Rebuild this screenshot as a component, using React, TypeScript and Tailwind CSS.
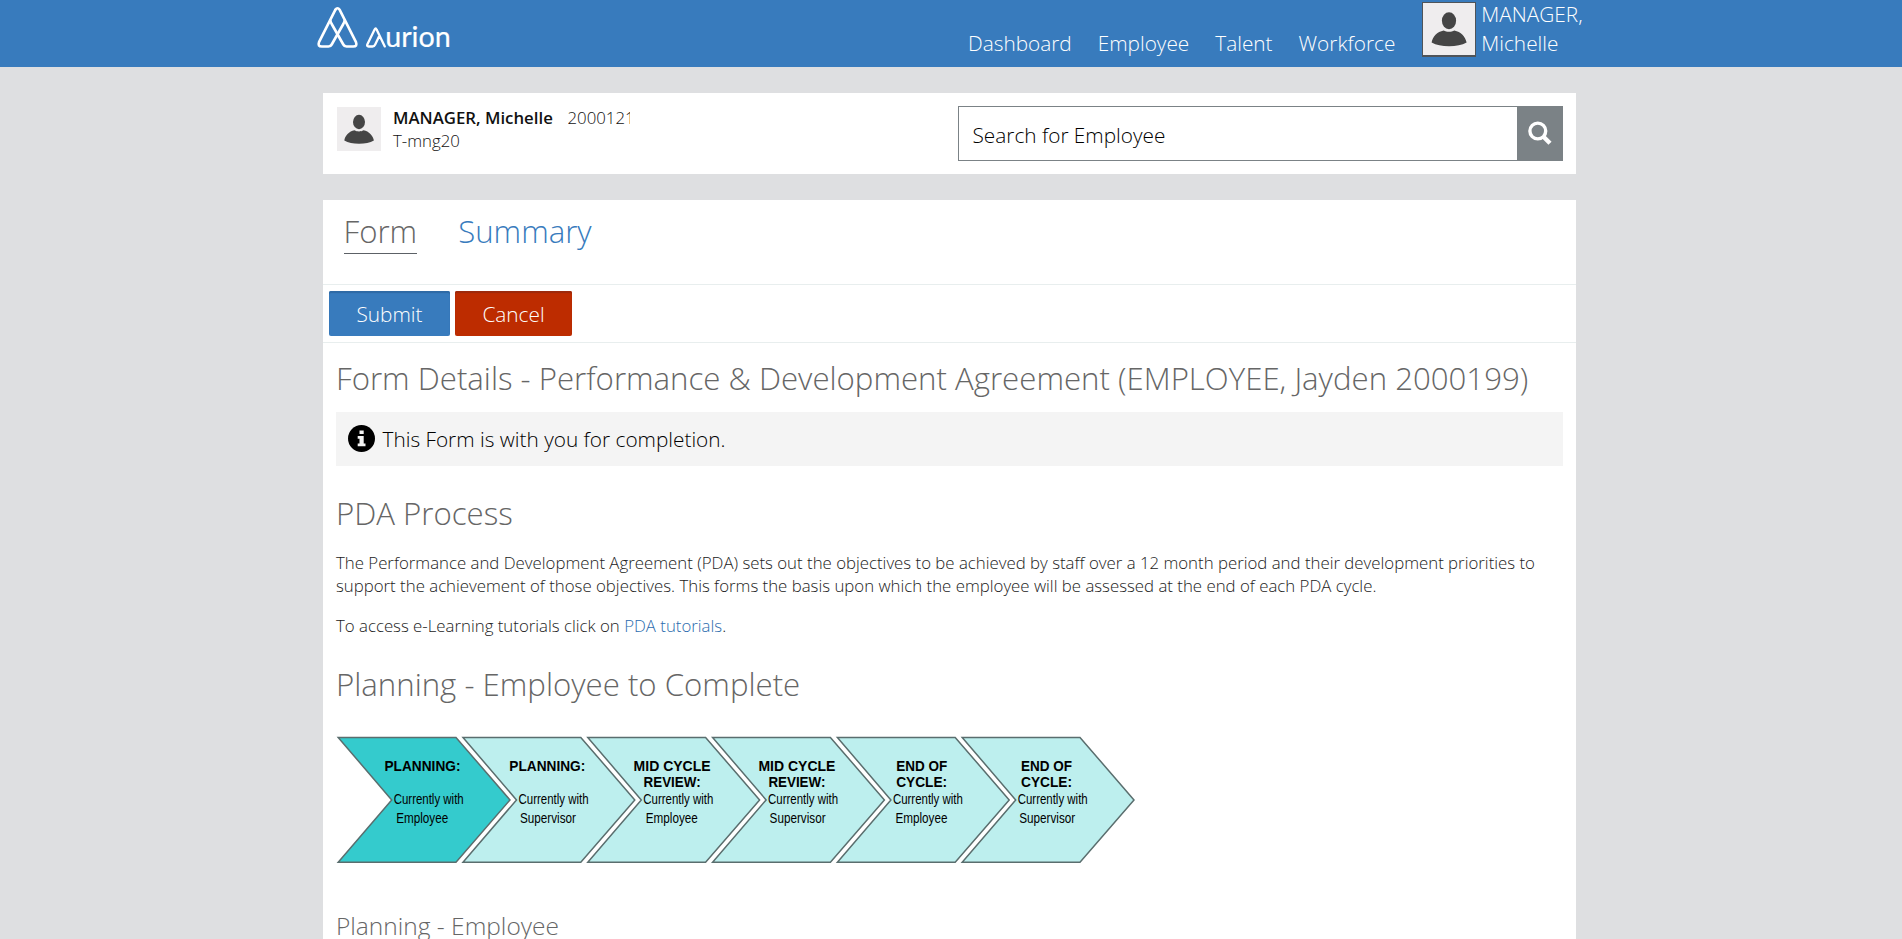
import React from 'react';

const NAV = ['Dashboard', 'Employee', 'Talent', 'Workforce'];

type Step = { title: [string, number][]; who: string; whoWidth: number; whoX: number };

const employee = { who: 'Employee', whoWidth: 52, whoX: 58 };
const supervisor = { who: 'Supervisor', whoWidth: 56, whoX: 57 };

const planning: [string, number][] = [['PLANNING:', 76]];
const mid: [string, number][] = [['MID CYCLE', 77], ['REVIEW:', 57]];
const end: [string, number][] = [['END OF', 51], ['CYCLE:', 51]];

const STEPS: Step[] = [
  { title: planning, ...employee },
  { title: planning, ...supervisor },
  { title: mid, ...employee },
  { title: mid, ...supervisor },
  { title: end, ...employee },
  { title: end, ...supervisor },
];

function Person({ className, stretch }: { className: string; stretch?: boolean }) {
  return (
    <svg viewBox="0 0 44 44" className={className} preserveAspectRatio={stretch ? 'none' : 'xMidYMid meet'}>
      <ellipse cx="22" cy="15" rx="6" ry="7.2" fill="#454545" />
      <path d="M7.3 33.5C8 28.500 12 24.300 17.500 23.200C20 24.800 24 24.800 26.500 23.200C32 24.300 36 28.500 36.900 33.500C33 35.700 28 36.700 22.100 36.700C16 36.700 11.200 35.700 7.300 33.500Z" fill="#454545" />
    </svg>
  );
}

function Logo() {
  return (
    <svg width="146" height="60" viewBox="0 0 146 60" role="img" aria-label="Aurion" className="block shrink-0">
      <g fill="none" stroke="#fff" strokeWidth="2.6" strokeLinejoin="round" strokeLinecap="round">
        <path d="M25.300 9.800Q27.500 6.800 29.700 9.800L46 42.200Q47.600 46.500 43.200 46.500H36.500Q34.400 46.500 33.300 44.500L21.700 24Q20.700 22 20.300 20.500" />
        <path d="M25.300 9.800L9 42.200Q7.400 46.500 11.800 46.500H18.500Q20.600 46.500 21.700 44.500L33.300 24Q34.300 22 34.700 20.500" />
        <path strokeWidth="2.300" d="M74.800 46.400L66.600 29.600Q65.700 27.400 64.600 29.600L57.300 44.400Q56.600 46.500 58.600 46.500H62.500Q64.300 46.500 65.200 44.600L69 36.500" />
      </g>
      <text x="75.200" y="47.400" textLength="65.500" lengthAdjust="spacingAndGlyphs" fontSize="28.500" fontWeight="400" fill="#fff" stroke="#fff" strokeWidth="0.200" className="font-['Lato',sans-serif]">
        urion
      </text>
    </svg>
  );
}

function Chevrons() {
  return (
    <svg width="804" height="128" viewBox="336 736 804 128" className="mt-[31px] block font-['Liberation_Sans',sans-serif] font-normal">
      {STEPS.map((s, i) => {
        const x = 338.2 + i * 124.8;
        return (
          <g key={i}>
            <path
              d={`M${x} 737.5H${x + 117.8}L${x + 171.8} 799.900L${x + 117.8} 862.300H${x}L${x + 53.5} 799.900Z`}
              fill={i === 0 ? '#34cbcd' : '#bdefee'}
              stroke="#5a6e6e"
              strokeWidth="1.500"
            />
            {s.title.map(([t, w], n) => (
              <text key={t} x={x + 84.3 - w / 2} y={771 + n * 15.5} textLength={w} lengthAdjust="spacingAndGlyphs" fontSize="13.800" fontWeight="700" fill="#000">
                {t}
              </text>
            ))}
            <text x={x + 55.5} y="803.500" textLength="70" lengthAdjust="spacingAndGlyphs" fontSize="13.800" fill="#000">
              Currently with
            </text>
            <text x={x + s.whoX} y="822.800" textLength={s.whoWidth} lengthAdjust="spacingAndGlyphs" fontSize="13.800" fill="#000">
              {s.who}
            </text>
          </g>
        );
      })}
    </svg>
  );
}

export default function App() {
  return (
    <div className="h-[939px] overflow-hidden bg-[#dedfe1] font-['Open_Sans','Noto_Sans',sans-serif] font-light text-black">
      <header className="flex h-[67px] items-start bg-[#387bbd] pl-[310px]">
        <Logo />
        <nav className="ml-[512px] mt-[29px] flex gap-[26px] text-[20.8px] leading-[29px] text-white">
          {NAV.map((n) => (
            <a key={n}>{n}</a>
          ))}
        </nav>
        <div className="ml-[27px] mt-[2px] h-[55px] w-[54px] shrink-0 border border-b-2 border-[#4f5459] bg-[#efedee]">
          <Person className="h-full w-full" stretch />
        </div>
        <div className="ml-[5px] w-[110px] text-[20.8px] leading-[29px] text-white">
          MANAGER, Michelle
        </div>
      </header>

      <main className="ml-[323px] w-[1253px]">
        <section className="mt-[26px] flex h-[81px] items-start bg-white pl-[14px]">
          <Person className="mt-[14px] h-[44px] w-[44px] shrink-0 bg-[#efedee]" />
          <div className="ml-3 mt-[13px] text-[16.8px] leading-[23px] text-[#111]">
            <div className="flex">
              <span className="w-[174.5px] font-semibold">MANAGER, Michelle</span>
              <span className="w-[62.5px] overflow-hidden whitespace-nowrap">2000121</span>
            </div>
            <div>T-mng20</div>
          </div>
          <div className="ml-auto mr-[13px] mt-[13px] flex h-[55px] w-[605px]">
            <div className="flex-1 border border-r-0 border-[#7b8286] pl-[13.5px] text-[20.8px] leading-[57px]">
              Search for Employee
            </div>
            <div className="flex w-[46px] items-start justify-center bg-[#7b8286] pt-[15px]">
              <svg width="24" height="24" viewBox="0 0 24 24" fill="none" stroke="#fff">
                <circle cx="9.800" cy="10" r="7.900" strokeWidth="3.400" />
                <path d="M15.500 15.700L22 22.200" strokeWidth="4.400" />
              </svg>
            </div>
          </div>
        </section>

        <section className="mt-[26px] bg-white">
          <div className="flex h-[85px] items-start gap-[41px] border-b border-[#e8eeee] pl-[20.5px] pt-[10px] text-[31.2px] leading-[43px]">
            <a className="border-b border-[#5c6166] text-[#666]">Form</a>
            <a className="text-[#387bbd]">Summary</a>
          </div>
          <div className="flex h-[58px] gap-[5px] border-b border-[#e8eeee] pl-[6px] pt-[6px] text-[20.8px] leading-[46px] text-white">
            <button className="h-[45px] w-[121px] rounded-[2px] bg-[#387bbd] shadow-[inset_0_2px_1px_#2f6aa5]">Submit</button>
            <button className="h-[45px] w-[117px] rounded-[2px] bg-[#bd2c00] shadow-[inset_0_2px_1px_#9c2a0c]">Cancel</button>
          </div>
          <div className="pl-[13px] pr-[13px] pt-[14px] text-[16.81px] leading-[23px] text-[#222]">
            <h1 className="whitespace-nowrap text-[31.2px] leading-[42px] text-[#666]">
              Form Details - Performance &amp; Development Agreement (EMPLOYEE, Jayden 2000199)
            </h1>
            <div className="mt-[13px] flex h-[54px] items-center bg-[#f4f4f4] pl-[12px] text-[20.8px] leading-[54px] text-black">
              <svg width="27" height="27" viewBox="0 0 27 27" className="mb-[2px]">
                <circle cx="13.500" cy="13.500" r="13.500" fill="#000" />
                <path d="M11.500 5.500H15.700V9H11.500ZM9.700 11H15.700V18.500H17.500V21.300H9.700V18.500H11.500V13.800H9.700Z" fill="#f4f4f4" />
              </svg>
              <span className="ml-[7.5px]">This Form is with you for completion.</span>
            </div>
            <h2 className="mt-[26px] text-[31.2px] leading-[42px] text-[#666]">PDA Process</h2>
            <p className="mt-[17px]">
              The Performance and Development Agreement (PDA) sets out the objectives to be achieved by staff over a 12 month period and their development priorities to support the achievement of those objectives. This forms the basis upon which the employee will be assessed at the end of each PDA cycle.
            </p>
            <p className="mt-[17px]">
              To access e-Learning tutorials click on <a className="text-[#2b6cae]">PDA tutorials</a>.
            </p>
            <h2 className="mt-[26px] text-[31.2px] leading-[42px] text-[#666]">Planning - Employee to Complete</h2>
            <Chevrons />
            <h3 className="mt-[45px] text-[24.5px] leading-[33px] text-[#666]">Planning - Employee</h3>
          </div>
        </section>
      </main>
    </div>
  );
}
